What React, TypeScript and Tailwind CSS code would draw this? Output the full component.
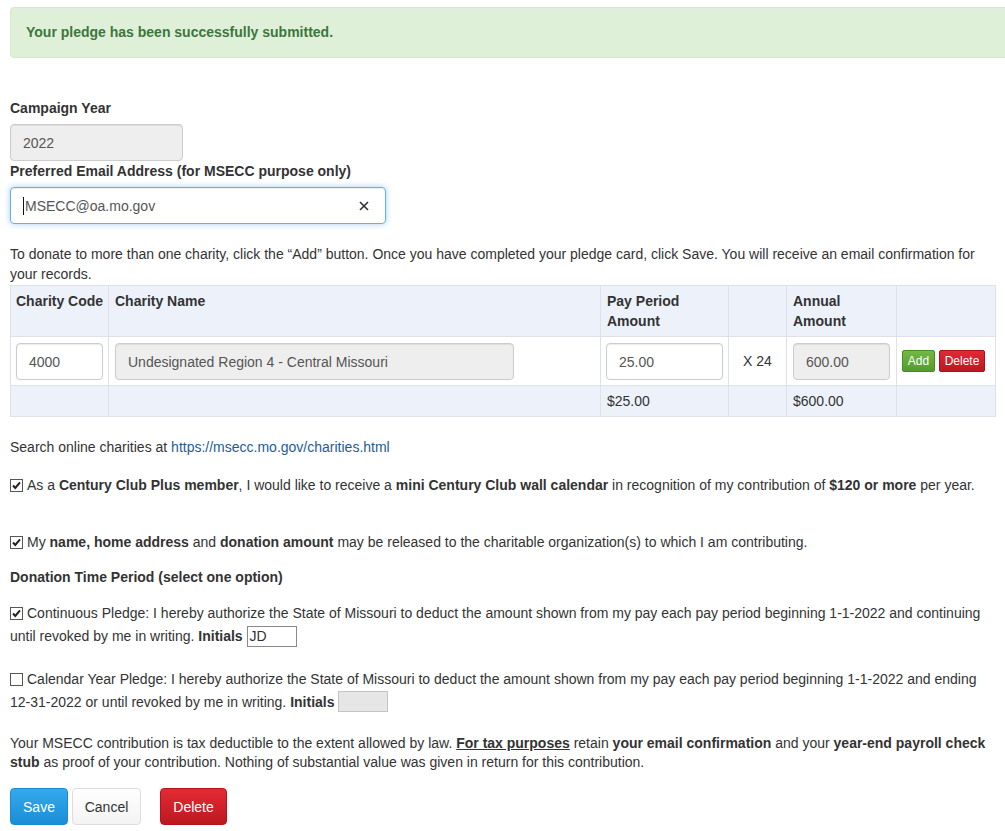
import React from 'react';

function Box({ checked }: { checked?: boolean }) {
  return (
    <span className="relative mr-[4px] inline-block h-[13px] w-[13px] border border-[#555] bg-white align-[-2px]">
      {checked && (
        <svg viewBox="0 0 11 11" className="absolute inset-0 h-full w-full">
          <path d="M2 5.5 L4.3 8 L9 2.3" stroke="#222" strokeWidth="2" fill="none" />
        </svg>
      )}
    </span>
  );
}

const inputBase =
  'h-[37px] rounded-[4px] border border-[#ccc] px-[12px] text-[14px] text-[#555] shadow-[inset_0_1px_1px_rgba(0,0,0,0.075)] flex items-center';

export default function App() {
  return (
    <div className="min-h-[831px] w-full overflow-x-hidden bg-white font-['Liberation_Sans',Arial,sans-serif] text-[14px] leading-[20px] text-[#333]">
      <div className="px-[10px] pt-[7px]">
        <div className="-mr-[20px] rounded-[4px] border border-[#d6e9c6] bg-[#dff0d8] px-[15px] py-[15px] font-bold leading-[19px] text-[#3c763d]">
          Your pledge has been successfully submitted.
        </div>

        <div className="mt-[40px] mb-[6px] font-bold">Campaign Year</div>
        <div className={`${inputBase} w-[173px] bg-[#eee]`}>2022</div>

        <div className="mb-[6px] font-bold">Preferred Email Address (for MSECC purpose only)</div>
        <div className="flex h-[37px] w-[376px] items-center rounded-[4px] border border-[#66afe9] pl-[12px] pr-[16px] text-[#555] shadow-[inset_0_1px_1px_rgba(0,0,0,0.075),0_0_6px_rgba(102,175,233,0.6)]">
          <span className="mr-[1px] inline-block h-[18px] w-[1px] bg-[#111]" />
          <span className="flex-1">MSECC@oa.mo.gov</span>
          <svg viewBox="0 0 10 10" className="h-[10px] w-[10px]">
            <path d="M1 1 L9 9 M9 1 L1 9" stroke="#333" strokeWidth="1.6" />
          </svg>
        </div>

        <p className="mt-[20px]">
          To donate to more than one charity, click the “Add” button. Once you have completed your pledge card, click Save. You will receive an email confirmation for your records.
        </p>

        <table className="mt-[1px] w-[985px] table-fixed border-collapse border border-[#dde2ea]">
          <colgroup>
            <col className="w-[98px]" />
            <col className="w-[492px]" />
            <col className="w-[128px]" />
            <col className="w-[58px]" />
            <col className="w-[110px]" />
            <col className="w-[99px]" />
          </colgroup>
          <thead>
            <tr className="bg-[#edf2fa] align-top font-bold">
              <th className="whitespace-nowrap border border-[#dde2ea] pl-[5px] pr-[2px] py-[5px] text-left">Charity Code</th>
              <th className="border border-[#dde2ea] px-[6px] py-[5px] text-left">Charity Name</th>
              <th className="border border-[#dde2ea] px-[6px] py-[5px] text-left">Pay Period<br />Amount</th>
              <th className="border border-[#dde2ea] px-[6px] py-[5px]" />
              <th className="border border-[#dde2ea] px-[6px] py-[5px] text-left">Annual<br />Amount</th>
              <th className="border border-[#dde2ea] px-[6px] py-[5px]" />
            </tr>
          </thead>
          <tbody>
            <tr>
              <td className="border border-[#dde2ea] px-[5px] pt-[6px] pb-[5px]">
                <div className={`${inputBase} w-[87px] bg-white`}>4000</div>
              </td>
              <td className="border border-[#dde2ea] px-[6px] pt-[6px] pb-[5px]">
                <div className={`${inputBase} w-[399px] bg-[#eee]`}>Undesignated Region 4 - Central Missouri</div>
              </td>
              <td className="border border-[#dde2ea] px-[5px] pt-[6px] pb-[5px]">
                <div className={`${inputBase} w-[117px] bg-white`}>25.00</div>
              </td>
              <td className="border border-[#dde2ea] text-center align-middle">X 24</td>
              <td className="border border-[#dde2ea] px-[6px] pt-[6px] pb-[5px]">
                <div className={`${inputBase} w-[97px] bg-[#eee]`}>600.00</div>
              </td>
              <td className="border border-[#dde2ea] px-[5px] align-middle">
                <div className="flex gap-[4px]">
                  <span className="flex h-[22px] w-[33px] items-center justify-center rounded-[2px] border border-[#4a8f25] bg-gradient-to-b from-[#74b843] to-[#539c2c] text-[12px] text-white">Add</span>
                  <span className="flex h-[22px] w-[46px] items-center justify-center rounded-[2px] border border-[#a8121a] bg-gradient-to-b from-[#e02a33] to-[#bd1720] text-[12px] text-white">Delete</span>
                </div>
              </td>
            </tr>
            <tr className="bg-[#edf2fa]">
              <td className="border border-[#dde2ea] px-[6px] py-[5px]" />
              <td className="border border-[#dde2ea] px-[6px] py-[5px]" />
              <td className="border border-[#dde2ea] px-[6px] py-[5px]">$25.00</td>
              <td className="border border-[#dde2ea] px-[6px] py-[5px]" />
              <td className="border border-[#dde2ea] px-[6px] py-[5px]">$600.00</td>
              <td className="border border-[#dde2ea] px-[6px] py-[5px]" />
            </tr>
          </tbody>
        </table>

        <p className="mt-[20px]">
          Search online charities at <span className="text-[#1f5c99]">https://msecc.mo.gov/charities.html</span>
        </p>

        <p className="mt-[18px]">
          <Box checked />As a <b>Century Club Plus member</b>, I would like to receive a <b>mini Century Club wall calendar</b> in recognition of my contribution of <b>$120 or more</b> per year.
        </p>

        <p className="mt-[37px]">
          <Box checked />My <b>name, home address</b> and <b>donation amount</b> may be released to the charitable organization(s) to which I am contributing.
        </p>

        <div className="mt-[15px] font-bold">Donation Time Period (select one option)</div>

        <p className="mt-[15px] leading-[23px]">
          <Box checked />Continuous Pledge: I hereby authorize the State of Missouri to deduct the amount shown from my pay each pay period beginning 1-1-2022 and continuing until revoked by me in writing. <b>Initials</b>{' '}
          <span className="inline-block h-[21px] w-[50px] border border-[#8a8a8a] bg-white pl-[2px] align-baseline leading-[19px]">JD</span>
        </p>

        <p className="mt-[20px] leading-[23px]">
          <Box />Calendar Year Pledge: I hereby authorize the State of Missouri to deduct the amount shown from my pay each pay period beginning 1-1-2022 and ending 12-31-2022 or until revoked by me in writing. <b>Initials</b>{' '}
          <span className="inline-block h-[21px] w-[50px] border border-[#c4c4c4] bg-[#e6e6e6] align-[-5px]" />
        </p>

        <p className="mt-[20px] leading-[19px]">
          Your MSECC contribution is tax deductible to the extent allowed by law. <b className="underline">For tax purposes</b> retain <b>your email confirmation</b> and your <b>year-end payroll check stub</b> as proof of your contribution. Nothing of substantial value was given in return for this contribution.
        </p>

        <div className="mt-[16px] flex items-center">
          <span className="flex h-[37px] w-[58px] items-center justify-center rounded-[4px] border border-[#1d8ad0] bg-gradient-to-b from-[#33aaec] to-[#1a8dd6] text-white">Save</span>
          <span className="ml-[4px] flex h-[37px] w-[69px] items-center justify-center rounded-[4px] border border-[#ddd] bg-gradient-to-b from-white to-[#f3f3f3] text-[#333]">Cancel</span>
          <span className="ml-[19px] flex h-[37px] w-[67px] items-center justify-center rounded-[4px] border border-[#b3141c] bg-gradient-to-b from-[#e42a33] to-[#bb1820] text-white">Delete</span>
        </div>
      </div>
    </div>
  );
}
